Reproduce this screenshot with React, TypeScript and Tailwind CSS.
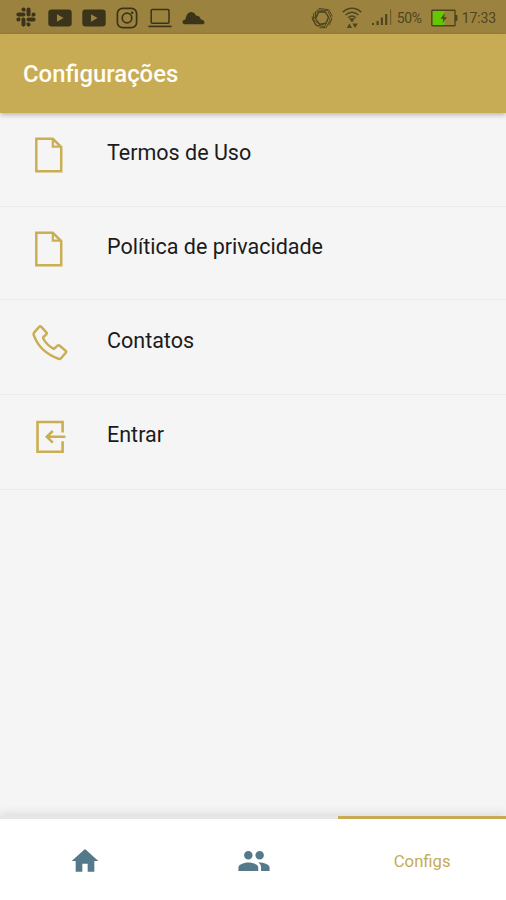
import type { ReactNode } from 'react';
import { FaSlack } from 'react-icons/fa';
import { MdHome, MdPeople } from 'react-icons/md';

type Item = { id: string; label: string; icon: ReactNode; rowClass: string };

function FileIcon() {
  return (
    <svg className="w-[36px] h-[36px]" viewBox="0 0 36 36" fill="none" stroke="currentColor" strokeWidth="2.5">
      <path d="M4.3 1.8H20.8L29.2 10V34.2H4.3Z" />
      <path d="M20.8 2V9.6H28.8" strokeWidth="2.2" />
    </svg>
  );
}

function PhoneIcon() {
  return (
    <svg className="w-[36px] h-[36px]" viewBox="0 0 36 36" fill="none" stroke="currentColor" strokeWidth="2.5" strokeLinejoin="round">
      <path d="M7.2 1.7C7.9 1.2 8.7 1.3 9.3 1.9L14.3 7.3C14.9 8 14.9 8.8 14.2 9.4L11.5 12C11 12.5 11.1 13.3 11.5 14C13.7 17.9 17 21.2 21 23.4C21.6 23.8 22.3 23.7 22.8 23.2L25.5 20.7C26.2 20.1 27 20.1 27.7 20.7L33.6 25.7C34.3 26.3 34.4 27 33.8 27.7L29 33.2C28.4 33.9 27.4 34.1 26.5 33.8C14.8 29.6 5.8 21.6 1.8 10.2C1.4 9.2 1.6 8.2 2.3 7.4Z" />
    </svg>
  );
}

function EnterIcon() {
  return (
    <svg className="w-[36px] h-[36px]" viewBox="0 0 36 36" fill="none" stroke="currentColor" strokeWidth="2.6">
      <path d="M30.6 13.4V3H5.5V32.7H30.6V22.2" />
      <path d="M33.4 17.8H14.8M20.8 12L14.8 17.8L20.8 23.6" />
    </svg>
  );
}

function YoutubeIcon() {
  return (
    <svg className="w-[24px] h-[18px]" viewBox="0 0 24 18">
      <rect x=".3" y=".6" width="23.4" height="16.8" rx="3.2" fill="currentColor" />
      <path d="M9 5.2L15.6 9L9 12.8Z" fill="#9b833f" />
    </svg>
  );
}

function InstagramIcon() {
  return (
    <svg className="w-[22px] h-[22px]" viewBox="0 0 22 22" fill="none" stroke="currentColor" strokeWidth="1.7">
      <rect x="1.4" y="1.4" width="19.2" height="19.2" rx="5.2" />
      <circle cx="11" cy="11" r="4.8" />
      <circle cx="16.2" cy="5.8" r="1.3" fill="currentColor" stroke="none" />
    </svg>
  );
}

function LaptopIcon() {
  return (
    <svg className="w-[24px] h-[20px]" viewBox="0 0 24 20" fill="none" stroke="currentColor" strokeWidth="1.5">
      <rect x="3.2" y="1.6" width="17.8" height="13.6" rx="1" />
      <path d="M.4 18.4H23.6" strokeWidth="1.7" />
    </svg>
  );
}

function CloudIcon() {
  return (
    <svg className="w-[23px] h-[14px]" viewBox="0 0 23 14" fill="currentColor">
      <path d="M3 13.2C1.3 13.2 .3 12.1 .5 10.9C.7 9.6 1.7 8.9 3.4 8.6C4.2 4 6.2 1 9 1C11.5 1 13.1 2.6 14.2 4.8C16.6 4.5 18.2 5.8 18.7 8.2C20.9 8.6 22.5 9.8 22.5 11.4C22.5 12.6 21.6 13.2 20.3 13.2Z" />
    </svg>
  );
}

function ApertureIcon() {
  return (
    <svg className="w-[22px] h-[22px]" viewBox="0 0 22 22" fill="none" stroke="currentColor" strokeWidth="1">
      <path d="M7.8 5L14.2 4.8L17.6 10L15 16.2L8.6 17.2L4.6 11.8Z" strokeWidth="1.3" />
      <path d="M4.5 4.8L14.2 4.8M5.6 3L16.5 3.4M7.8 1.4L17.8 2.8M14.2 4.8L19 13.2M16.5 3.4L20.8 12M18 2.8L21.2 9.4M17.6 10L13.6 19.6M19 13.2L15.2 20.6M20.8 12L18 18.4M15 16.2L6.4 19.2M13.6 19.6L4.4 18.2M15.2 20.6L8.4 20.8M8.6 17.2L2 12.6M6.4 19.2L1.2 12.4M4.4 18.2L.9 9.4M4.6 11.8L4.5 4.8M2 12.6L3 5.6M7.8 5L2 12.6" />
    </svg>
  );
}

function WifiIcon() {
  return (
    <svg className="w-[20px] h-[22px]" viewBox="0 0 20 22" fill="none" stroke="currentColor" strokeWidth="1.3">
      <path d="M.7 5.2C6 -.1 14 -.1 19.3 5.2M3.5 8C7.4 4.3 12.6 4.3 16.5 8M6.1 10.7C8.5 8.6 11.5 8.6 13.9 10.7" />
      <path d="M7 11.3H13L10 15.6ZM4.8 21L7.4 16.6L10 21ZM10.4 16.6H15.8L13.1 21Z" fill="currentColor" stroke="none" />
    </svg>
  );
}

function SignalIcon() {
  return (
    <svg className="w-[20px] h-[17px]" viewBox="0 0 20 17" fill="currentColor">
      <path d="M0 14H2V16H0ZM4.5 12H6.7V16H4.5ZM8.8 8.5H11V16H8.8ZM13.1 5H15.3V16H13.1Z" />
      <path d="M18 .5H19.2V16H18Z" opacity=".6" />
    </svg>
  );
}

function BatteryIcon() {
  return (
    <svg className="w-[27px] h-[18px]" viewBox="0 0 27 18">
      <rect x="1.5" y="2" width="12" height="14" fill="#62c900" />
      <rect x=".8" y="1.2" width="23.2" height="15.6" rx=".6" fill="none" stroke="currentColor" strokeWidth="1.4" />
      <path d="M24 6H26.4V12H24Z" fill="currentColor" />
      <path d="M14 4L9.5 9.8H12.4L11.4 14L16 8.2H13Z" fill="currentColor" />
    </svg>
  );
}

const items: Item[] = [
  { id: 'terms', label: 'Termos de Uso', icon: <FileIcon />, rowClass: 'h-[94px] pt-[24px]' },
  { id: 'privacy', label: 'Política de privacidade', icon: <FileIcon />, rowClass: 'h-[93px] pt-[24px]' },
  { id: 'contacts', label: 'Contatos', icon: <PhoneIcon />, rowClass: 'h-[95px] pt-[25px]' },
  { id: 'login', label: 'Entrar', icon: <EnterIcon />, rowClass: 'h-[95px] pt-[24px]' },
];

export default function App() {
  return (
    <div className="flex flex-col h-screen overflow-hidden bg-[#f5f5f5] font-['Roboto',sans-serif]">
      {/* Status bar */}
      <div className="flex items-center justify-between h-[34px] shrink-0 pl-[15px] pr-[10px] bg-[#9b833f] text-[#3b341b]">
        <div className="flex items-center">
          <FaSlack className="w-[22px] h-[22px]" />
          <div className="flex items-center pt-px ml-[11px] gap-[10px]">
            <YoutubeIcon />
            <YoutubeIcon />
            <InstagramIcon />
            <LaptopIcon />
            <CloudIcon />
          </div>
        </div>
        <div className="flex items-center pt-px text-[#50441f]">
          <ApertureIcon />
          <span className="ml-[9px]"><WifiIcon /></span>
          <span className="ml-[10px]"><SignalIcon /></span>
          <span className="ml-[5px] w-[26px] text-[14px] leading-none whitespace-nowrap tracking-[-0.3px]">50%</span>
          <span className="ml-[8px]"><BatteryIcon /></span>
          <span className="ml-[4px] text-[14px] leading-none tracking-[-0.1px]">17:33</span>
        </div>
      </div>

      {/* Header */}
      <header className="relative z-10 flex items-center h-[79px] shrink-0 px-[23px] pt-[3px] bg-[#c8ac55] shadow-[0_2px_5px_rgba(0,0,0,0.25)]">
        <h1 className="text-[23.9px] font-medium text-[#fffdf5]">Configurações</h1>
      </header>

      {/* Options */}
      <main className="flex-1">
        {items.map((item) => (
          <button
            key={item.id}
            className={`flex items-start w-full pl-[32px] border-b border-[#ececec] text-left ${item.rowClass}`}
          >
            <span className="w-[36px] text-[#ccae52]">{item.icon}</span>
            <span className="ml-[39px] text-[21.5px] leading-[31px] text-[#1b1b1b]">{item.label}</span>
          </button>
        ))}
      </main>

      {/* Bottom tabs */}
      <nav className="grid grid-cols-3 h-[84px] shrink-0 bg-white border-t-[3px] border-[#e6e6e6] shadow-[0_-3px_9px_rgba(0,0,0,0.1)]">
        <button className="flex items-center justify-center pt-[2px] pl-px text-[#54798a]">
          <MdHome className="w-[32px] h-[32px]" />
        </button>
        <button className="flex items-center justify-center pt-[2px] pl-[2px] text-[#54798a]">
          <MdPeople className="w-[34px] h-[34px]" />
        </button>
        <button className="flex items-center justify-center -mt-[3px] ml-px pt-[4px] border-t-[3px] border-[#c6aa54] text-[16.7px] text-[#c6aa54]">
          Configs
        </button>
      </nav>
    </div>
  );
}
